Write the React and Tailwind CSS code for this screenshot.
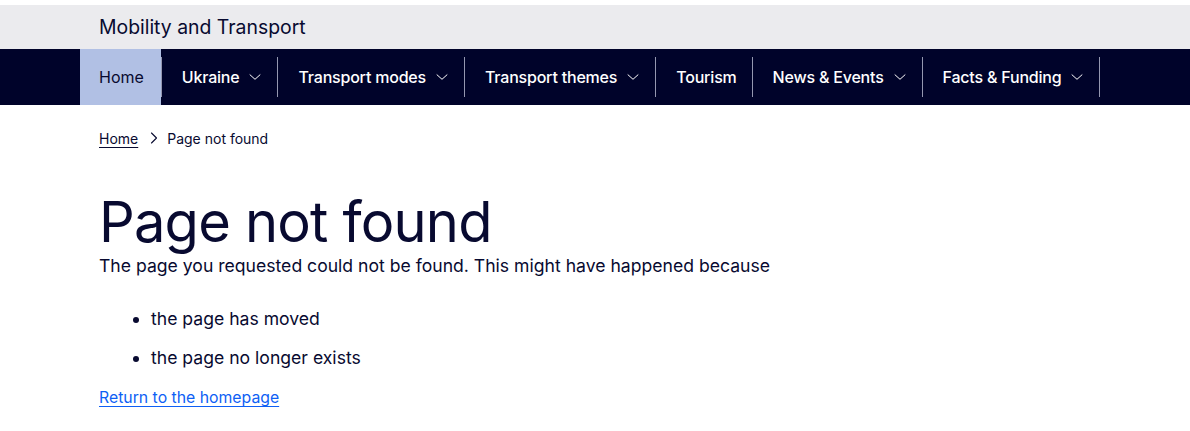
import React from "react";

function Chevron() {
  return (
    <svg width="12" height="12" viewBox="0 0 12 12" className="ml-[10px] shrink-0" fill="none">
      <path d="M1 3.8 L6 8.3 L11 3.8" stroke="currentColor" strokeWidth="1" strokeLinecap="round" strokeLinejoin="round" />
    </svg>
  );
}

const items = [
  { label: "Ukraine", chevron: true },
  { label: "Transport modes", chevron: true },
  { label: "Transport themes", chevron: true },
  { label: "Tourism", chevron: false },
  { label: "News & Events", chevron: true },
  { label: "Facts & Funding", chevron: true },
];

function Sep() {
  return <div className="w-px h-10 bg-[#9497b0] shrink-0" />;
}

export default function App() {
  return (
    <div className="min-h-[431px] bg-white text-[#080a30]" style={{ fontFamily: "Inter, 'Noto Sans', sans-serif" }}>
      <div className="h-[5px] bg-white" />
      <div className="h-[44px] bg-[#ebebee] px-[80px] flex items-center pt-[2px]">
        <div className="px-[19px] text-[19.4px] leading-none text-[#080a30] whitespace-nowrap">Mobility and Transport</div>
      </div>
      <nav className="h-[56px] bg-[#00032a] px-[80px] flex items-center">
        <div className="h-full flex items-center">
          <a className="h-full flex items-center pl-[19px] pr-[17px] bg-[#b1c0e4] text-[#080a30] text-[16px] whitespace-nowrap">Home</a>
          {items.map((it) => (
            <React.Fragment key={it.label}>
              <Sep />
              <a className={it.chevron
                ? "h-full flex items-center pl-5 pr-4 text-white text-[16px] font-medium tracking-[-0.2px] whitespace-nowrap"
                : "h-full flex items-center pl-5 pr-[15px] text-white text-[16px] font-medium tracking-[-0.2px] whitespace-nowrap"}>
                {it.label}
                {it.chevron && <Chevron />}
              </a>
            </React.Fragment>
          ))}
          <Sep />
        </div>
      </nav>
      <main className="px-[80px]">
        <div className="px-[19px]">
          <div className="flex items-center text-[14px] mt-[23px] h-[20px]">
            <a className="underline underline-offset-[3px] decoration-1">Home</a>
            <svg width="12" height="12" viewBox="0 0 12 12" className="ml-[10px] mr-[7px]" fill="none">
              <path d="M3.5 1 L8.5 6 L3.5 11" stroke="currentColor" strokeWidth="1.1" strokeLinecap="round" strokeLinejoin="round" />
            </svg>
            <span>Page not found</span>
          </div>
          <h1 className="mt-[42px] text-[56px] leading-[64px] font-normal tracking-[-0.8px]">Page not found</h1>
          <p className="text-[17.6px] leading-[24px] whitespace-nowrap">The page you requested could not be found. This might have happened because</p>
          <ul className="mt-[29px] list-disc pl-[52px] text-[17.6px] leading-[24px]">
            <li className="mb-[15px]">the page has moved</li>
            <li>the page no longer exists</li>
          </ul>
          <a className="block mt-[16px] text-[15.8px] leading-[24px] text-[#0e5ff5] underline underline-offset-[3px] decoration-1 w-max">Return to the homepage</a>
        </div>
      </main>
    </div>
  );
}
